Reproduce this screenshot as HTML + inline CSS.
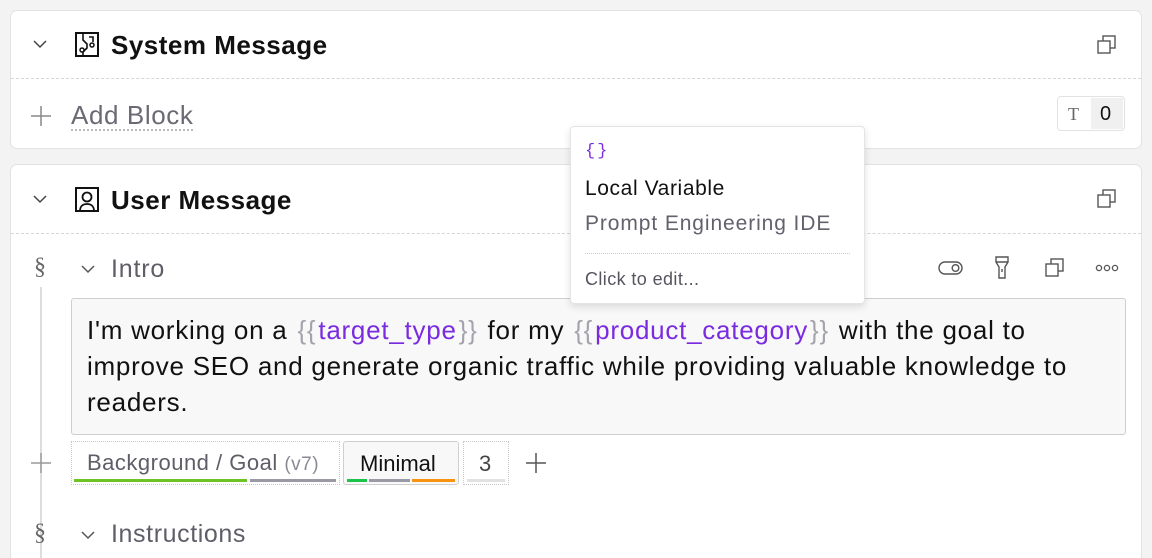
<!DOCTYPE html>
<html><head><style>
*{margin:0;padding:0;box-sizing:border-box}
html,body{width:1152px;height:558px;overflow:hidden}
body{background:#f3f3f3;font-family:"Liberation Sans",sans-serif;position:relative;color:#111}
.a{position:absolute}
.card{position:absolute;left:10px;width:1132px;background:#fff;border:1.5px solid #e2e2e2;border-radius:7px}
.dash{position:absolute;left:11px;width:1130px;border-top:1.5px dashed #d6d6d6}
.t{position:absolute;white-space:nowrap}
svg{position:absolute;overflow:visible}
.v{color:#7a2be0}.b{color:#a3a3ad;padding:0 2px}
</style></head><body>
<div class="card" style="top:10px;height:139px"></div>
<div class="dash" style="top:78px"></div>
<div class="card" style="top:164px;height:420px"></div>
<div class="dash" style="top:233px"></div>

<svg style="left:33px;top:40px" width="14" height="9"><path d="M1 1l6 6 6-6" fill="none" stroke="#444" stroke-width="1.5"/></svg>
<svg style="left:33px;top:195px" width="14" height="9"><path d="M1 1l6 6 6-6" fill="none" stroke="#444" stroke-width="1.5"/></svg>
<svg style="left:81px;top:265px" width="14" height="9"><path d="M1 1l6 6 6-6" fill="none" stroke="#555" stroke-width="1.5"/></svg>
<svg style="left:81px;top:531px" width="14" height="9"><path d="M1 1l6 6 6-6" fill="none" stroke="#555" stroke-width="1.5"/></svg>

<svg style="left:75px;top:32px" width="24" height="25"><rect x="1" y="1" width="22" height="23" fill="none" stroke="#111" stroke-width="2"/><path d="M8 1v7l4 4v4l-4 4v4M14 5h4v5" fill="none" stroke="#111" stroke-width="1.6"/><circle cx="17" cy="13" r="2" fill="none" stroke="#111" stroke-width="1.5"/><circle cx="7" cy="18" r="2" fill="none" stroke="#111" stroke-width="1.5"/></svg>
<div class="t" style="left:111px;top:30px;font-size:26px;font-weight:bold;letter-spacing:0.5px">System Message</div>
<svg style="left:75px;top:187px" width="24" height="25"><rect x="1" y="1" width="22" height="23" fill="none" stroke="#111" stroke-width="2"/><circle cx="12" cy="10" r="4.5" fill="none" stroke="#111" stroke-width="1.8"/><path d="M5 24c0-5 3-7 7-7s7 2 7 7" fill="none" stroke="#111" stroke-width="1.8"/></svg>
<div class="t" style="left:111px;top:185px;font-size:26px;font-weight:bold;letter-spacing:0.5px">User Message</div>

<svg style="left:1097px;top:35px" width="20" height="20"><rect x="6" y="1" width="12" height="12" fill="#fff" stroke="#555" stroke-width="1.4"/><rect x="1" y="6" width="12" height="12" fill="#fff" stroke="#555" stroke-width="1.4"/></svg>
<svg style="left:1097px;top:189px" width="20" height="20"><rect x="6" y="1" width="12" height="12" fill="#fff" stroke="#555" stroke-width="1.4"/><rect x="1" y="6" width="12" height="12" fill="#fff" stroke="#555" stroke-width="1.4"/></svg>

<svg style="left:31px;top:106px" width="20" height="20"><path d="M10 0v20M0 10h20" stroke="#888" stroke-width="1.5"/></svg>
<div class="t" style="left:71px;top:101px;font-size:26px;color:#6a6a74;border-bottom:2px dotted #bbb;line-height:28px;letter-spacing:0.6px">Add Block</div>
<div class="a" style="left:1057px;top:96px;width:68px;height:35px;border:1.5px solid #e2e2e2;border-radius:4px;background:#fff"></div>
<div class="a" style="left:1091px;top:98px;width:32px;height:31px;background:#f0f0f0"></div>
<div class="t" style="left:1068px;top:104px;font-size:18px;font-family:'Liberation Serif',serif;color:#666">T</div>
<div class="t" style="left:1100px;top:103px;font-size:20px;color:#111">0</div>

<div class="t" style="left:34px;top:254px;font-size:24px;color:#666;font-family:'Liberation Serif',serif">§</div>
<div class="t" style="left:111px;top:255px;font-size:25px;color:#5e5e68;letter-spacing:0.8px">Intro</div>
<div class="a" style="left:40px;top:287px;width:1.5px;height:271px;background:#ddd"></div>
<svg style="left:938px;top:260px" width="26" height="16"><rect x="1" y="2" width="23" height="12" rx="6" fill="none" stroke="#555" stroke-width="1.4"/><circle cx="17.5" cy="8" r="3.3" fill="none" stroke="#555" stroke-width="1.4"/></svg>
<svg style="left:994px;top:256px" width="16" height="24"><path d="M2 1h12v5H2zM2 6l3 5v11h6V11l3-5M8 13v3" fill="none" stroke="#555" stroke-width="1.4"/></svg>
<svg style="left:1045px;top:258px" width="20" height="20"><rect x="6" y="1" width="12" height="12" fill="#fff" stroke="#555" stroke-width="1.4"/><rect x="1" y="6" width="12" height="12" fill="#fff" stroke="#555" stroke-width="1.4"/></svg>
<svg style="left:1096px;top:264px" width="24" height="8"><circle cx="3" cy="4" r="2.6" fill="none" stroke="#555" stroke-width="1.3"/><circle cx="11" cy="4" r="2.6" fill="none" stroke="#555" stroke-width="1.3"/><circle cx="19" cy="4" r="2.6" fill="none" stroke="#555" stroke-width="1.3"/></svg>

<div class="a" style="left:71px;top:298px;width:1055px;height:137px;background:#f8f8f8;border:1.5px solid #cfcfcf;border-radius:3px"></div>
<div class="a" style="left:87px;top:312px;width:1036px;font-size:26px;line-height:36px;color:#111;letter-spacing:0.75px;white-space:nowrap">I'm working on a <span class="b">{{</span><span class="v">target_type</span><span class="b">}}</span> for my <span class="b">{{</span><span class="v">product_category</span><span class="b">}}</span> with the goal to<br>improve SEO and generate organic traffic while providing valuable knowledge to<br>readers.</div>

<svg style="left:31px;top:453px" width="20" height="20"><path d="M10 0v20M0 10h20" stroke="#999" stroke-width="1.4"/></svg>
<div class="a" style="left:71px;top:441px;width:269px;height:44px;border:1.5px dotted #c8c8c8"></div>
<div class="t" style="left:87px;top:450px;font-size:22px;color:#5e5e68;letter-spacing:0.5px">Background / Goal <span style="color:#8a8a94;font-size:19px">(v7)</span></div>
<div class="a" style="left:74px;top:479px;width:173px;height:3px;background:#6cc425"></div>
<div class="a" style="left:250px;top:479px;width:86px;height:3px;background:#9a9aa6"></div>
<div class="a" style="left:343px;top:441px;width:116px;height:44px;border:1.5px solid #cfcfcf;border-radius:3px;background:#f8f8f8"></div>
<div class="t" style="left:360px;top:451px;font-size:22px;color:#111">Minimal</div>
<div class="a" style="left:347px;top:479px;width:20px;height:3px;background:#1bc34a"></div>
<div class="a" style="left:369px;top:479px;width:41px;height:3px;background:#9a9aa6"></div>
<div class="a" style="left:412px;top:479px;width:43px;height:3px;background:#f7930f"></div>
<div class="a" style="left:463px;top:441px;width:46px;height:44px;border:1.5px dotted #c8c8c8"></div>
<div class="t" style="left:479px;top:451px;font-size:22px;color:#444">3</div>
<div class="a" style="left:467px;top:479px;width:38px;height:3px;background:#e2e2e2"></div>
<svg style="left:526px;top:453px" width="20" height="20"><path d="M10 0v20M0 10h20" stroke="#555" stroke-width="1.5"/></svg>

<div class="t" style="left:34px;top:520px;font-size:24px;color:#666;font-family:'Liberation Serif',serif">§</div>
<div class="t" style="left:111px;top:520px;font-size:25px;color:#5e5e68;letter-spacing:0.6px">Instructions</div>

<div class="a" style="left:570px;top:126px;width:295px;height:178px;background:#fff;border:1px solid #e4e4e4;border-radius:4px;box-shadow:0 3px 8px rgba(0,0,0,0.12)"></div>
<div class="t" style="left:585px;top:142px;font-size:17px;font-family:'Liberation Mono',monospace;color:#7a2be0;letter-spacing:2px">{}</div>
<div class="t" style="left:585px;top:177px;font-size:21px;color:#111;letter-spacing:0.6px">Local Variable</div>
<div class="t" style="left:585px;top:212px;font-size:21px;color:#62626c;letter-spacing:0.9px">Prompt Engineering IDE</div>
<div class="a" style="left:585px;top:253px;width:265px;border-top:1px dotted #ccc"></div>
<div class="t" style="left:585px;top:269px;font-size:18px;color:#55555f;letter-spacing:0.4px">Click to edit...</div>
</body></html>
